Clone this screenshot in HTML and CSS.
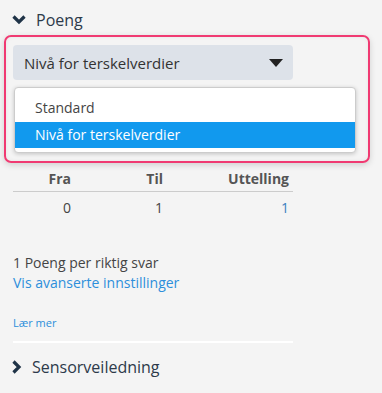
FILE: index.html
```html
<!DOCTYPE html>
<html>
<head>
<meta charset="utf-8">
<link rel="stylesheet" href="styles.css">
</head>
<body>
<div class="panel">
  <div class="section-head">
    <svg class="chev" width="14" height="10" viewBox="0 0 14 10"><path d="M1.5 1.5 L7 7 L12.5 1.5" fill="none" stroke="#1f3347" stroke-width="3.2"/></svg>
    <span>Poeng</span>
  </div>
  <div class="focus-box">
    <div class="select">
      <span>Nivå for terskelverdier</span>
      <svg class="caret" width="14" height="8" viewBox="0 0 14 8"><path d="M0 0 H14 L7 8 Z" fill="#222"/></svg>
    </div>
    <ul class="options">
      <li>Standard</li>
      <li class="active">Nivå for terskelverdier</li>
    </ul>
  </div>
  <div class="table">
    <div class="row head"><span>Fra</span><span>Til</span><span>Uttelling</span></div>
    <div class="row"><span>0</span><span>1</span><span class="blue">1</span></div>
  </div>
  <p class="info">1 Poeng per riktig svar</p>
  <a class="link">Vis avanserte innstillinger</a>
  <a class="small-link">Lær mer</a>
  <div class="divider"></div>
  <div class="section-head closed">
    <svg class="chev" width="10" height="14" viewBox="0 0 10 14"><path d="M1.5 1.5 L7 7 L1.5 12.5" fill="none" stroke="#1f3347" stroke-width="3.2"/></svg>
    <span>Sensorveiledning</span>
  </div>
</div>
</body>
</html>
```
FILE: styles.css
```css
html, body {
  margin: 0;
  padding: 0;
  background: #f4f4f4;
  font-family: "Open Sans", sans-serif;
  color: #333;
}
.panel {
  width: 382px;
  height: 393px;
  overflow: hidden;
  display: flex;
  flex-direction: column;
}
.section-head {
  display: flex;
  align-items: center;
  gap: 10px;
  padding: 8px 0 0 12px;
  font-size: 16px;
  color: #2d3a4a;
  height: 24px;
}
.focus-box {
  margin: 3px 0 0 4px;
  width: 366px;
  height: 128px;
  border: 2px solid #f03a72;
  border-radius: 7px;
  box-shadow: 0 2px 6px rgba(0,0,0,0.15), inset 0 0 4px rgba(0,0,0,0.06);
  padding: 8px 0 0 7px;
  box-sizing: border-box;
}
.select {
  width: 280px;
  height: 35px;
  background: #dde2e9;
  border-radius: 4px;
  display: flex;
  align-items: center;
  justify-content: space-between;
  padding: 0 10px 0 11px;
  box-sizing: border-box;
  font-size: 15px;
  color: #333;
}
.options {
  list-style: none;
  margin: 7px 0 0 1px;
  padding: 9px 0 4px 0;
  width: 342px;
  background: #fff;
  border: 1px solid #ccc;
  border-radius: 4px;
  box-shadow: 0 1px 4px rgba(0,0,0,0.2);
  box-sizing: border-box;
  font-size: 14px;
}
.options li {
  padding: 0 20px;
  height: 25px;
  line-height: 22px;
  color: #444;
}
.options li.active {
  background: #1199ee;
  color: #fff;
  height: 26px;
  line-height: 26px;
}
.table {
  margin: 4px 0 0 13px;
  width: 280px;
  font-size: 14px;
}
.row {
  display: grid;
  grid-template-columns: 58px 92px 126px;
  text-align: right;
  padding-right: 5px;
}
.row.head {
  font-weight: 700;
  color: #555;
  height: 24px;
  line-height: 24px;
  border-bottom: 1px solid #ccc;
}
.row:not(.head) {
  height: 32px;
  line-height: 32px;
  color: #444;
}
.blue { color: #3a7fc0; }
.info {
  margin: 29px 0 0 13px;
  font-size: 14px;
  color: #444;
  line-height: 20px;
}
.link {
  margin-left: 13px;
  font-size: 14px;
  color: #2d8fdb;
  line-height: 20px;
}
.small-link {
  margin: 23px 0 0 13px;
  font-size: 11px;
  color: #2d8fdb;
  line-height: 14px;
}
.divider {
  margin: 11px 0 0 13px;
  width: 280px;
  height: 2px;
  background: #fff;
}
.section-head.closed {
  padding-top: 12px;
  gap: 10px;
}
```
